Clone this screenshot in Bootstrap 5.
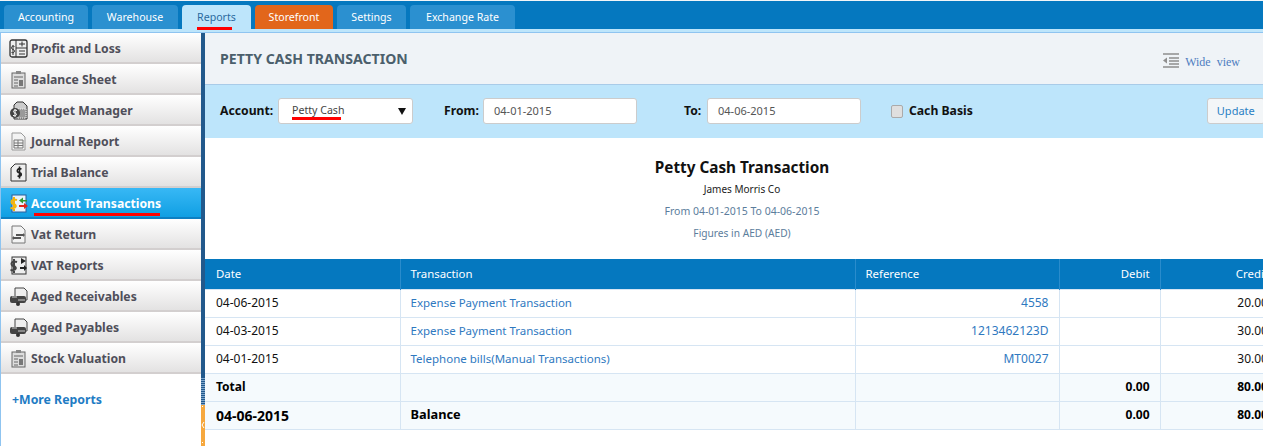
<!DOCTYPE html>
<html lang="en"><head><meta charset="utf-8"><title>Petty Cash Transaction</title>
<link href="https://cdn.jsdelivr.net/npm/bootstrap@5.3.0/dist/css/bootstrap.min.css" rel="stylesheet">
<style>
html,body{height:446px;overflow:hidden;background:#fff}
body{font-family:"Noto Sans","Open Sans","Liberation Sans",sans-serif;font-size:12px;color:#111;width:1263px}
.topbar{height:32px;background:#0578bf;border-top:1px solid #f2f5f8;padding:4px 0 0 4px;border-bottom:3px solid #bde5fb;box-sizing:border-box}
.strip{height:1px;background:#8fc4f0}
.toptab{height:24px;background:#2b90d0;color:#fff;border-radius:4px 4px 0 0;text-decoration:none;font-size:10.6px;line-height:24px;text-align:center;display:block}
.tabrow{gap:4px}
.t1{width:84px}.t2{width:86px}.t3{width:69px;color:#2a6a9f;background:#bde5fb}.t4{width:78px;background:#e2661b}.t5{width:69px}.t6{width:105px}
.mainarea{height:413px;width:1279px}
.sidenav{width:205px;flex:none;border-left:1px solid #8fc4f0;border-right:4px solid #22598c;position:relative}
.menuitem{height:31px;display:flex;align-items:center;gap:3px;padding:3px 0 0 8px;background:linear-gradient(#fff,#e3e2e2);border-bottom:2px solid #d3cfcf;color:#4f4f5a;font-weight:700;font-size:12.2px;text-decoration:none}
.menuitem.on{background:linear-gradient(#38b8f5,#109fe3);color:#fff;border-bottom:2px solid #0d7fc2}
.menuitem svg{width:19px;height:19px;flex:none;margin-top:-2px}
.moreline{padding:17px 0 0 11px;color:#1f7cc4;font-weight:700;font-size:12.3px}
.gripbar{position:absolute;right:-4px;bottom:0;width:4px;height:41px;background:#f6a83e}
.gripbar svg{display:block;width:4px;height:41px}
.griphatch{position:absolute;right:-4px;bottom:41px;width:4px;height:28px;background:repeating-linear-gradient(#22598c 0 1px,#7fa6cb 1px 2px)}
.redmark{position:relative;display:inline-block}
.redmark::after{content:"";position:absolute;background:#f00;height:3px}
.rm-tab::after{left:0;right:4px;bottom:-1px}
.rm-menu::after{left:3px;right:1px;bottom:-3px}
.rm-sel::after{left:0;right:3px;bottom:-1px}
.contentpane{width:1074px;flex:none}
.titlebar{height:52px;background:#eff3f7;border-bottom:1px solid #a9cbe8;padding:0 0 0 15px}
.pagetitle{font-size:14.100px;font-weight:700;color:#4b5f6c;margin:0;padding-top:1px}
.wideview{font-family:"Liberation Serif",serif;font-size:12px;color:#4d7cc0;margin:6px 39px 0 0;word-spacing:3px;gap:6px}
.wideview svg{width:16px;height:15px;margin-top:-3px}
.filterbar{height:53px;background:#bde5fb;padding:0 0 0 15px;font-weight:700;font-size:12.200px}
.lblacc{width:58px}.lblfrom{width:39px;margin-left:31px}.lblto{width:23px;margin-left:47px}
.selbox{width:135px;height:26px;background:#fff;border:1px solid #ccc;border-radius:3px;padding:0 6px 0 13px;font-weight:400;font-size:10.600px;color:#444;display:flex;align-items:center;justify-content:space-between;margin-top:-1px}
.selbox i{display:block;width:0;height:0;border:4px solid transparent;border-top:7px solid #111;border-bottom:0}
.datebox{width:154px;height:26px;background:#fff;border:1px solid #ccc;border-radius:3px;padding:0 10px;font-weight:400;font-size:11px;color:#555;line-height:23px;margin-top:-1px}
.chk{width:12px;height:13px;background:#dfdfdf;border:1px solid #aaa;border-radius:2px;display:block;margin:0 6px 0 30px}
.updatebtn{height:26px;width:58px;background:#f3f6f8;border:1px solid #ccc;border-radius:3px;color:#2a80c4;font-size:11px;line-height:23px;text-align:center;font-weight:400;margin-left:234px;margin-top:-1px}
.reporthead{height:121px;padding-top:18px;text-align:center;color:#555;font-size:10.500px}
.reporthead h2{font-size:15.300px;font-weight:700;color:#111;margin:0;line-height:22px}
.reporthead div{line-height:22px}
.reporthead .org{color:#222;font-size:10px}
.reporthead .muted{color:#5c7d9c}
.reporthead .muted2{font-size:10.200px}
.tbl{width:1074px;table-layout:fixed;border-collapse:collapse;margin:0}
.tbl td,.tbl th{border:1px solid #d6e5f3;padding:0 10px;height:28px;font-size:12px;font-weight:400;vertical-align:middle}
.tbl td:first-child{border-left:0;padding-left:11px}
.tbl thead th{height:30px;background:#0578bf;color:#fff;border-color:#2a8ccc;border-top:0;border-bottom:0;font-size:11.400px}
.tbl thead th:first-child{border-left:0;padding-left:11px}
.tbl a{color:#2f79bf;text-decoration:none}
.tbl a.txlink{font-size:11.500px}
.tbl .sumrow td{background:#f5fafd;font-weight:700;color:#000}
.tbl .sumrow td.balcell{font-size:12.800px}
.tbl .sumrow td.datebold{font-size:14px}
</style></head><body>
<div class="topbar"><div class="d-flex tabrow">
<a class="toptab t1" href="#">Accounting</a><a class="toptab t2" href="#">Warehouse</a><a class="toptab t3" href="#"><span class="redmark rm-tab">Reports</span></a><a class="toptab t4" href="#">Storefront</a><a class="toptab t5" href="#">Settings</a><a class="toptab t6" href="#">Exchange Rate</a>
</div></div><div class="strip"></div>
<div class="d-flex mainarea">
<nav class="sidenav">
<a class="menuitem" href="#"><svg viewBox="0 0 19 19"><rect x="1" y="1" width="17" height="17" rx="2" fill="#eee" stroke="#333" stroke-width="1.300"/><path d="M7 1v17M7 9h11M10 5h6M13 2.500v5M10 12h6M10 15h6" stroke="#333" fill="none"/><path d="M5.500 7.500C2 6 1.500 10 4 10.500s2 4-1.500 3M4 6v10" stroke="#333" fill="none"/></svg>Profit and Loss</a>
<a class="menuitem" href="#"><svg viewBox="0 0 19 19"><rect x="3" y="3" width="13" height="15" fill="#ddd" stroke="#666"/><rect x="7" y="1" width="5" height="3" fill="#888"/><path d="M5 7h9M5 10h4M5 13h4M5 16h4" stroke="#666"/><rect x="10" y="10" width="4" height="6" fill="#777"/></svg>Balance Sheet</a>
<a class="menuitem" href="#"><svg viewBox="0 0 19 19"><path d="M5 4l3-3h6l4 4v13H5z" fill="#ccc" stroke="#333"/><path d="M9 8h8v9H9z" fill="#999" stroke="#eee" stroke-dasharray="1 1"/><circle cx="6" cy="12" r="5" fill="#444"/><path d="M8 9.500C4 8 3.500 11.500 6 12s2 3.500-2 2.500M6 8v8" stroke="#fff" fill="none"/></svg>Budget Manager</a>
<a class="menuitem" href="#"><svg viewBox="0 0 19 19"><path d="M3 1h9l4 4v13H3z" fill="#f3f3f3" stroke="#999"/><path d="M5 8h9v8H5zM5 11h9M5 13.500h9M9 8v8" fill="none" stroke="#777"/></svg>Journal Report</a>
<a class="menuitem" href="#"><svg viewBox="0 0 19 19"><path d="M2 5l4-4h11v17H2z" fill="#eee" stroke="#333"/><path d="M12.500 6C8 4.500 7 9 10 9.500s3.500 4.500-1.500 3.500M10.500 3.500V15.500" stroke="#222" stroke-width="1.600" fill="none"/></svg>Trial Balance</a>
<a class="menuitem on" href="#"><svg viewBox="0 0 19 19"><rect x="3" y="1" width="14" height="17" fill="#e8f2fb" stroke="#2a5e9c"/><path d="M8 6C2 4 1 9 4.500 10s3.500 5-3 4M5 3v14" stroke="#f5b50c" stroke-width="2" fill="none"/><path d="M18 6h-4V3.500l-4 3 4 3V7.500h4z" fill="#2f9a2f"/><path d="M10 11h5V9l4 3-4 3v-2h-5z" fill="#e0261c"/></svg><span class="redmark rm-menu">Account Transactions</span></a>
<a class="menuitem" href="#"><svg viewBox="0 0 19 19"><path d="M3 1h9l4 4v13H3z" fill="#f3f3f3" stroke="#777"/><path d="M7 9h7V8l2 2-2 2v-1H7zM12 12H5v-1l-2 2 2 2v-1h7z" fill="#555"/></svg>Vat Return</a>
<a class="menuitem" href="#"><svg viewBox="0 0 19 19"><rect x="3" y="1" width="14" height="17" fill="#eee" stroke="#333"/><path d="M8 6C2 4 1 9 4.500 10s3.500 5-3 4M5 3v14" stroke="#444" stroke-width="2" fill="none"/><path d="M12 2l5 3-5 3zM11 11h4V9l3 3-3 3v-2h-4z" fill="#222"/></svg>VAT Reports</a>
<a class="menuitem" href="#"><svg viewBox="0 0 19 19"><path d="M6 1h9l3 3v9H6z" fill="#eee" stroke="#444"/><rect x="1" y="9" width="16" height="7" rx="2" fill="#444"/><path d="M3 10h5M9 13h7" stroke="#ccc"/><circle cx="9" cy="17" r="2" fill="#333"/></svg>Aged Receivables</a>
<a class="menuitem" href="#"><svg viewBox="0 0 19 19"><path d="M6 1h9l3 3v9H6z" fill="#eee" stroke="#444"/><rect x="1" y="9" width="16" height="7" rx="2" fill="#444"/><path d="M3 10h5M9 13h7" stroke="#ccc"/><circle cx="9" cy="17" r="2" fill="#333"/></svg>Aged Payables</a>
<a class="menuitem" href="#"><svg viewBox="0 0 19 19"><rect x="3" y="3" width="13" height="15" fill="#ddd" stroke="#666"/><rect x="7" y="1" width="5" height="3" fill="#888"/><path d="M5 7h9M5 10h4M5 13h4M5 16h4" stroke="#666"/><rect x="10" y="10" width="4" height="6" fill="#777"/></svg>Stock Valuation</a>
<div class="moreline">+More Reports</div>
<div class="griphatch"></div>
<div class="gripbar"><svg viewBox="0 0 4 41"><path d="M1 1h1v1H1zM1 37h1v1H1z" fill="#fff"/><path d="M3 17l-2 3 2 3" stroke="#fff" fill="none"/></svg></div>
</nav>
<main class="contentpane">
<div class="titlebar d-flex justify-content-between align-items-center"><h1 class="pagetitle">PETTY CASH TRANSACTION</h1>
<div class="d-flex align-items-center wideview"><svg viewBox="0 0 16 15"><path d="M0 1h16M6 5h10M6 8h10M6 11h10M0 14h16" stroke="#8f8f8f" stroke-width="1.500" fill="none"/><path d="M4 4.500v6L0 7.500z" fill="#8f8f8f"/></svg>Wide view</div></div>
<div class="filterbar d-flex align-items-center">
<span class="lblacc">Account:</span><div class="selbox"><span class="redmark rm-sel">Petty Cash</span><i></i></div>
<span class="lblfrom">From:</span><div class="datebox">04-01-2015</div>
<span class="lblto">To:</span><div class="datebox">04-06-2015</div>
<span class="chk"></span><span>Cach Basis</span>
<div class="updatebtn">Update</div>
</div>
<div class="reporthead"><h2>Petty Cash Transaction</h2><div class="org">James Morris Co</div><div class="muted">From 04-01-2015 To 04-06-2015</div><div class="muted muted2">Figures in AED (AED)</div></div>
<table class="tbl"><colgroup><col style="width:195px"><col style="width:455px"><col style="width:204px"><col style="width:101px"><col></colgroup>
<thead><tr><th>Date</th><th>Transaction</th><th>Reference</th><th class="text-end">Debit</th><th class="text-end">Credit</th></tr></thead>
<tbody>
<tr><td>04-06-2015</td><td><a class="txlink" href="#">Expense Payment Transaction</a></td><td class="text-end"><a href="#">4558</a></td><td></td><td class="text-end">20.00</td></tr>
<tr><td>04-03-2015</td><td><a class="txlink" href="#">Expense Payment Transaction</a></td><td class="text-end"><a href="#">1213462123D</a></td><td></td><td class="text-end">30.00</td></tr>
<tr><td>04-01-2015</td><td><a class="txlink" href="#">Telephone bills(Manual Transactions)</a></td><td class="text-end"><a href="#">MT0027</a></td><td></td><td class="text-end">30.00</td></tr>
<tr class="sumrow"><td>Total</td><td></td><td></td><td class="text-end">0.00</td><td class="text-end">80.00</td></tr>
<tr class="sumrow"><td class="datebold">04-06-2015</td><td class="balcell">Balance</td><td></td><td class="text-end">0.00</td><td class="text-end">80.00</td></tr>
</tbody></table>
</main>
</div>
<script src="https://cdn.jsdelivr.net/npm/bootstrap@5.3.0/dist/js/bootstrap.bundle.min.js"></script>
</body></html>
